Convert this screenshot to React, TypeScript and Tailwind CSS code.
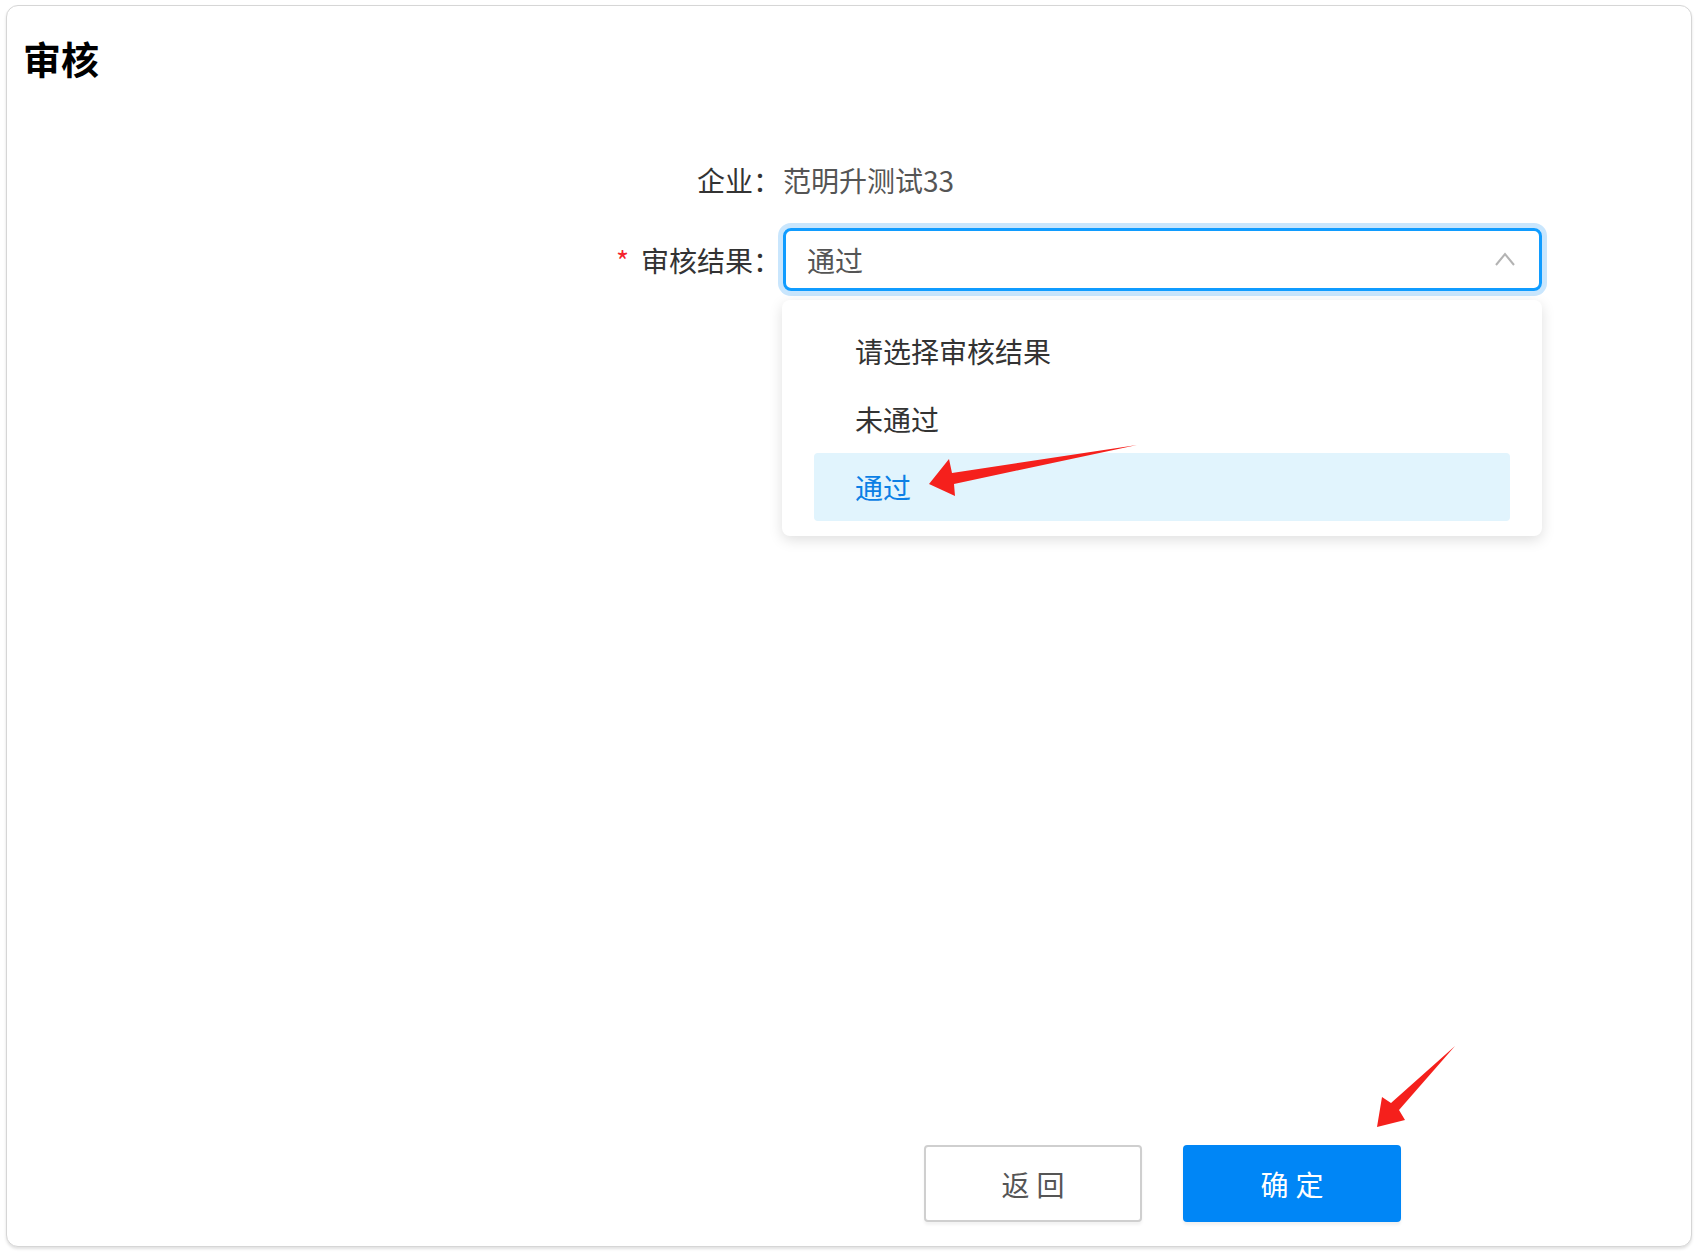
import React from "react";

const font = { fontFamily: '"Noto Sans CJK SC", "Noto Sans", sans-serif' };

export default function App() {
  return (
    <div className="relative w-[1698px] h-[1252px] bg-white pt-[5px] pl-[6px]" style={font}>
      <div className="flex flex-col w-[1686px] h-[1242px] rounded-[12px] border border-[#d6d6d6] bg-white shadow-[0_2px_3px_rgba(0,0,0,0.12)]">
        <div className="pl-[16px] pt-[26px] h-[78px] text-[38px] leading-[52px] font-bold text-black">审核</div>

        <div className="mt-[76px] flex flex-col">
          <div className="flex items-center h-[40px]">
            <div className="w-[776px] pr-[2px] text-right text-[28px] leading-[40px] text-[#333]">企业：</div>
            <div className="text-[28px] leading-[40px] text-[#555]">范明升测试33</div>
          </div>

          <div className="flex items-center mt-[28px]">
            <div className="w-[776px] pr-[2px] text-right text-[28px] leading-[40px] text-[#333]">
              <span className="text-[#f5222d] mr-[12px]">*</span>审核结果：
            </div>
            <div className="relative w-[759px]">
              <div className="flex items-center justify-between h-[63px] rounded-[8px] border-[3px] border-[#109cff] ring-[5px] ring-[#c9e6fd] pl-[21px] pr-[23px]">
                <span className="text-[28px] leading-[40px] text-[#555]">通过</span>
                <svg width="22" height="16" viewBox="0 0 22 16" className="mt-[-2px]">
                  <path d="M2 14 L11 3 L20 14" fill="none" stroke="#b3b3b3" strokeWidth="2" />
                </svg>
              </div>
              <div className="absolute left-[-1px] top-[72px] w-[760px] rounded-[8px] bg-white pt-[17px] pb-[15px] px-[32px] shadow-[0_4px_14px_rgba(0,0,0,0.13)] z-10">
                <div className="h-[68px] flex items-center pl-[41px] text-[28px] text-[#333]">请选择审核结果</div>
                <div className="h-[68px] flex items-center pl-[41px] text-[28px] text-[#333]">未通过</div>
                <div className="h-[68px] flex items-center pl-[41px] text-[28px] text-[#0b7fe5] bg-[#e1f4fd] rounded-[4px]">通过</div>
              </div>
            </div>
          </div>
        </div>

        <div className="flex-1" />

        <div className="flex pb-[24px]">
          <div className="w-[776px]" />
          <div className="w-[759px] flex justify-center gap-[41px]">
            <button className="w-[218px] h-[77px] rounded-[4px] border-2 border-[#cfcfcf] bg-white text-[28px] text-[#555] tracking-[7px] pl-[7px] shadow-[0_3px_3px_rgba(0,0,0,0.05)]">
              返回
            </button>
            <button className="w-[218px] h-[77px] rounded-[4px] bg-[#0086f6] text-[28px] text-white tracking-[7px] pl-[7px] shadow-[0_3px_3px_rgba(0,0,0,0.06)]">
              确定
            </button>
          </div>
        </div>
      </div>

      <svg className="absolute left-0 top-0 pointer-events-none z-20" width="1698" height="1252" viewBox="0 0 1698 1252">
        <polygon points="929,484 949,459 952,473 1137,445 954,484 955,496" fill="#f5201c" />
        <polygon points="1377,1127 1382,1097 1391,1103 1455,1046 1399,1110 1405,1120" fill="#f5201c" />
      </svg>
    </div>
  );
}
